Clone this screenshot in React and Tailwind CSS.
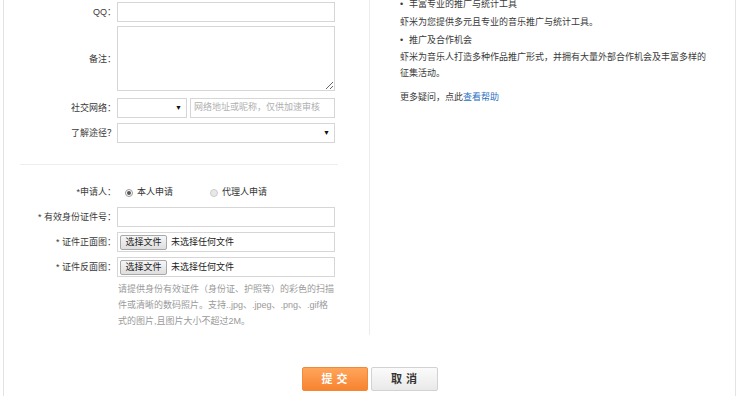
import React from "react";

const F = { fontFamily: '"Liberation Sans","Noto Sans CJK SC",sans-serif' };

function Label({ children }) {
  return (
    <div className="w-[113px] shrink-0 text-right pr-[1px] text-[9px] text-[#3a3a3a] leading-[20px]">
      {children}
    </div>
  );
}

function Radio({ checked }) {
  return (
    <span
      className={
        "inline-flex items-center justify-center w-[8px] h-[8px] rounded-full border " +
        (checked ? "border-[#999] bg-white" : "border-[#ccc] bg-[#e8e8e8]")
      }
    >
      {checked && <span className="w-[4px] h-[4px] rounded-full bg-[#555]" />}
    </span>
  );
}

function FileBox() {
  return (
    <div className="w-[218px] h-[20px] border border-[#d6d6d6] flex items-center pl-[2px] bg-white">
      <div className="h-[15px] w-[47px] border border-[#a8a8a8] rounded-[2px] bg-gradient-to-b from-[#f6f6f6] to-[#dedede] text-[9px] text-[#222] flex items-center justify-center leading-none">
        选择文件
      </div>
      <span className="ml-[4px] text-[9px] text-[#222] leading-none">未选择任何文件</span>
    </div>
  );
}

export default function App() {
  return (
    <div style={F} className="w-[739px] h-[396px] bg-white overflow-hidden">
      <div className="ml-[3px] w-[733px] h-[396px] border-l border-r border-[#e3e3e3] flex flex-col">
        <div className="flex">
          {/* left column */}
          <div className="w-[366px] h-[335px] border-r border-[#ececec] pt-[2px]">
            <div className="flex items-center">
              <Label>QQ：</Label>
              <div className="w-[218px] h-[20px] border border-[#d6d6d6]" />
            </div>
            <div className="flex items-center mt-[4px]">
              <Label>备注：</Label>
              <textarea className="w-[218px] h-[65px] border border-[#d6d6d6] resize-y outline-none block" />
            </div>
            <div className="flex items-center mt-[7px]">
              <Label>社交网络：</Label>
              <div className="w-[70px] h-[20px] border border-[#d6d6d6] flex items-center justify-end pr-[4px] text-[7px] text-[#111]">
                ▼
              </div>
              <div className="ml-[3px] w-[145px] h-[20px] border border-[#d6d6d6] flex items-center pl-[3px] text-[9px] text-[#b0b0b0]">
                网络地址或昵称，仅供加速审核
              </div>
            </div>
            <div className="flex items-center mt-[5px]">
              <Label>了解途径？</Label>
              <div className="w-[218px] h-[20px] border border-[#d6d6d6] flex items-center justify-end pr-[4px] text-[7px] text-[#111]">
                ▼
              </div>
            </div>
            <div className="ml-[16px] w-[318px] mt-[21px] border-t border-[#eeeeee]" />
            <div className="flex items-center mt-[21px] h-[14px]">
              <div className="w-[113px] shrink-0 text-right pr-[1px] text-[9px] text-[#3a3a3a]">*申请人：</div>
              <div className="ml-[8px] flex items-center">
                <Radio checked />
                <span className="ml-[4px] text-[9px] text-[#333]">本人申请</span>
              </div>
              <div className="ml-[37px] flex items-center">
                <Radio />
                <span className="ml-[4px] text-[9px] text-[#333]">代理人申请</span>
              </div>
            </div>
            <div className="flex items-center mt-[7px]">
              <Label>* 有效身份证件号：</Label>
              <div className="w-[218px] h-[20px] border border-[#d6d6d6]" />
            </div>
            <div className="flex items-center mt-[5px]">
              <Label>* 证件正面图：</Label>
              <FileBox />
            </div>
            <div className="flex items-center mt-[5px]">
              <Label>* 证件反面图：</Label>
              <FileBox />
            </div>
            <div className="ml-[114px] w-[240px] mt-[4px] text-[9px] leading-[16px] text-[#9a9a9a] whitespace-nowrap">
              请提供身份有效证件（身份证、护照等）的彩色的扫描
              <br />
              件或清晰的数码照片。支持..jpg、.jpeg、.png、.gif格
              <br />
              式的图片,且图片大小不超过2M。
            </div>
          </div>
          {/* right column */}
          <div className="flex-1 pl-[30px] text-[9px] text-[#3a3a3a] mt-[-5px]">
            <div className="leading-[18px] flex">
              <span className="w-[9px]">•</span>
              <span>丰富专业的推广与统计工具</span>
            </div>
            <div className="leading-[18px]">虾米为您提供多元且专业的音乐推广与统计工具。</div>
            <div className="leading-[18px] flex">
              <span className="w-[9px]">•</span>
              <span>推广及合作机会</span>
            </div>
            <div className="leading-[16px] whitespace-nowrap">
              虾米为音乐人打造多种作品推广形式，并拥有大量外部合作机会及丰富多样的
              <br />
              征集活动。
            </div>
            <div className="leading-[16px] mt-[8px]">
              更多疑问，点此<span className="text-[#2b6fc2]">查看帮助</span>
            </div>
          </div>
        </div>
        <div className="flex justify-center gap-[3px] mt-[32px]">
          <div className="w-[66px] h-[24px] rounded-[2px] border border-[#f08a3a] bg-gradient-to-b from-[#ffa55a] to-[#f7832e] text-white text-[11px] font-bold tracking-[4px] flex items-center justify-center pl-[4px]">
            提交
          </div>
          <div className="w-[67px] h-[24px] rounded-[2px] border border-[#d2d2d2] bg-gradient-to-b from-[#fbfbfb] to-[#e9e9e9] text-[#333] text-[11px] font-bold tracking-[4px] flex items-center justify-center pl-[4px]">
            取消
          </div>
        </div>
      </div>
    </div>
  );
}
